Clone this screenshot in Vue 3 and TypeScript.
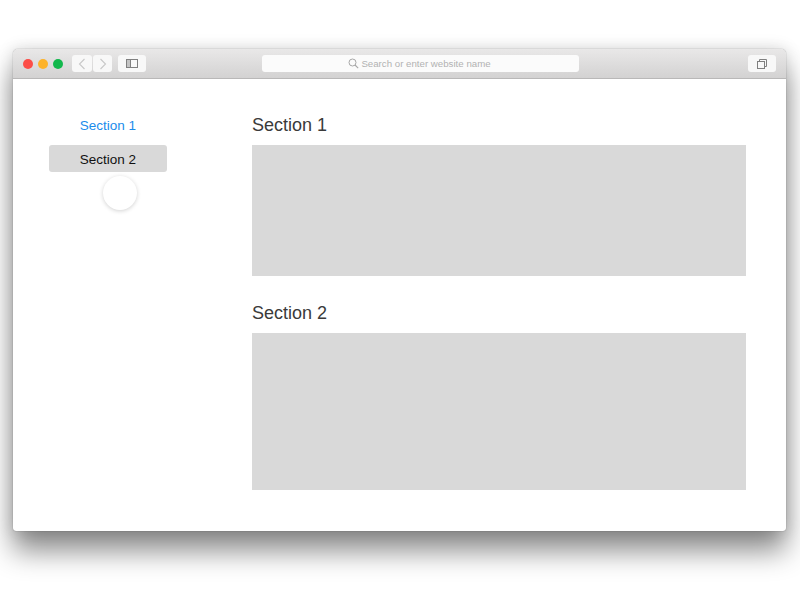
<script setup lang="ts">
const sections = [
  { title: 'Section 1', height: 131 },
  { title: 'Section 2', height: 157 },
]
</script>

<template>
  <div class="page">
    <div class="window">
      <header class="toolbar">
        <div class="lights">
          <span class="light red"></span>
          <span class="light yellow"></span>
          <span class="light green"></span>
        </div>
        <div class="nav-buttons">
          <span class="tool back">
            <svg width="8" height="12" viewBox="0 0 8 12"><path d="M6.5 1 1.5 6l5 5" fill="none" stroke="#c8c8c8" stroke-width="1.1" /></svg>
          </span>
          <span class="tool forward">
            <svg width="8" height="12" viewBox="0 0 8 12"><path d="M1.5 1l5 5-5 5" fill="none" stroke="#c8c8c8" stroke-width="1.1" /></svg>
          </span>
        </div>
        <span class="tool sidebar-btn">
          <svg width="12" height="9" viewBox="0 0 12 9"><rect x=".5" y=".5" width="11" height="8" fill="none" stroke="#808080" /><rect x="1" y="1" width="3.5" height="7" fill="#c4c4c4" /><path d="M4.5 1v7" stroke="#808080" /></svg>
        </span>
        <div class="address">
          <svg width="11" height="11" viewBox="0 0 11 11"><circle cx="4.5" cy="4.5" r="3.5" fill="none" stroke="#a8a8a8" /><path d="M7 7l3.2 3.2" stroke="#a8a8a8" stroke-width="1.1" /></svg>
          <span>Search or enter website name</span>
        </div>
        <span class="tool tabs-btn">
          <svg width="10" height="10" viewBox="0 0 10 10"><rect x=".5" y="2.5" width="7" height="7" fill="#f8f8f8" stroke="#808080" /><path d="M2.5 2.5v-2h7v7h-2" fill="none" stroke="#808080" /></svg>
        </span>
      </header>
      <div class="body">
        <nav class="side">
          <a class="nav-item active-link">Section 1</a>
          <a class="nav-item current">Section 2</a>
          <span class="cursor"></span>
        </nav>
        <main class="content">
          <section v-for="s in sections" :key="s.title" class="section">
            <h2>{{ s.title }}</h2>
            <div class="block" :style="{ height: s.height + 'px' }"></div>
          </section>
        </main>
      </div>
    </div>
  </div>
</template>

<style>
html, body { background: #fff; }
</style>

<style scoped>
.page {
  width: 800px;
  height: 600px;
  padding: 49px 14px 0 13px;
  box-sizing: border-box;
  overflow: hidden;
  font-family: "Liberation Sans", Arial, sans-serif;
}
.window {
  height: 482px;
  background: #fff;
  border-radius: 5px 5px 3px 3px;
  box-shadow: 0 0 1px rgba(0, 0, 0, .55), 0 0 16px rgba(0, 0, 0, .15), 0 20px 28px rgba(0, 0, 0, .45);
  display: flex;
  flex-direction: column;
}
.toolbar {
  height: 30px;
  box-sizing: border-box;
  flex: none;
  display: flex;
  align-items: center;
  padding: 0 10px;
  background: linear-gradient(#e9e8e8, #d3d2d2);
  border-bottom: 1px solid #b9b8b8;
  border-radius: 5px 5px 0 0;
}
.lights {
  display: flex;
  gap: 5px;
  margin-right: 9px;
}
.light {
  width: 10px;
  height: 10px;
  border-radius: 50%;
}
.red { background: #fc4d47; }
.yellow { background: #fdb32a; }
.green { background: #12b84c; }
.nav-buttons {
  display: flex;
  gap: 1px;
  margin-right: 6px;
}
.tool {
  height: 17px;
  background: #f8f8f8;
  border-radius: 3px;
  display: flex;
  align-items: center;
  justify-content: center;
}
.back { width: 20px; }
.forward { width: 19px; }
.sidebar-btn { width: 28px; margin-right: 116px; }
.address {
  width: 317px;
  height: 17px;
  box-sizing: border-box;
  padding-right: 2px;
  background: #fbfbfb;
  border-radius: 3px;
  display: flex;
  align-items: center;
  justify-content: center;
  gap: 2px;
  font-size: 9.7px;
  color: #b2b2b2;
  margin-right: 169px;
}
.tabs-btn { width: 28px; }
.body {
  flex: 1;
  display: flex;
}
.side {
  position: relative;
  width: 118px;
  margin: 32px 85px 0 36px;
  display: flex;
  flex-direction: column;
  gap: 7px;
}
.nav-item {
  height: 27px;
  line-height: 29px;
  text-align: center;
  font-size: 13.5px;
  border-radius: 3px;
}
.active-link { color: #1a8ceb; }
.current {
  background: #d9d9d9;
  color: #111;
}
.cursor {
  position: absolute;
  left: 54px;
  top: 65px;
  width: 34px;
  height: 34px;
  border-radius: 50%;
  background: #fff;
  box-shadow: 0 1px 4px rgba(0, 0, 0, .18);
}
.content {
  width: 494px;
  padding-top: 35px;
  display: flex;
  flex-direction: column;
  gap: 26px;
}
h2 {
  margin: 0 0 9px;
  height: 22px;
  line-height: 22px;
  font-size: 18px;
  font-weight: 400;
  color: #3a3a3a;
}
.block { background: #d9d9d9; }
</style>
